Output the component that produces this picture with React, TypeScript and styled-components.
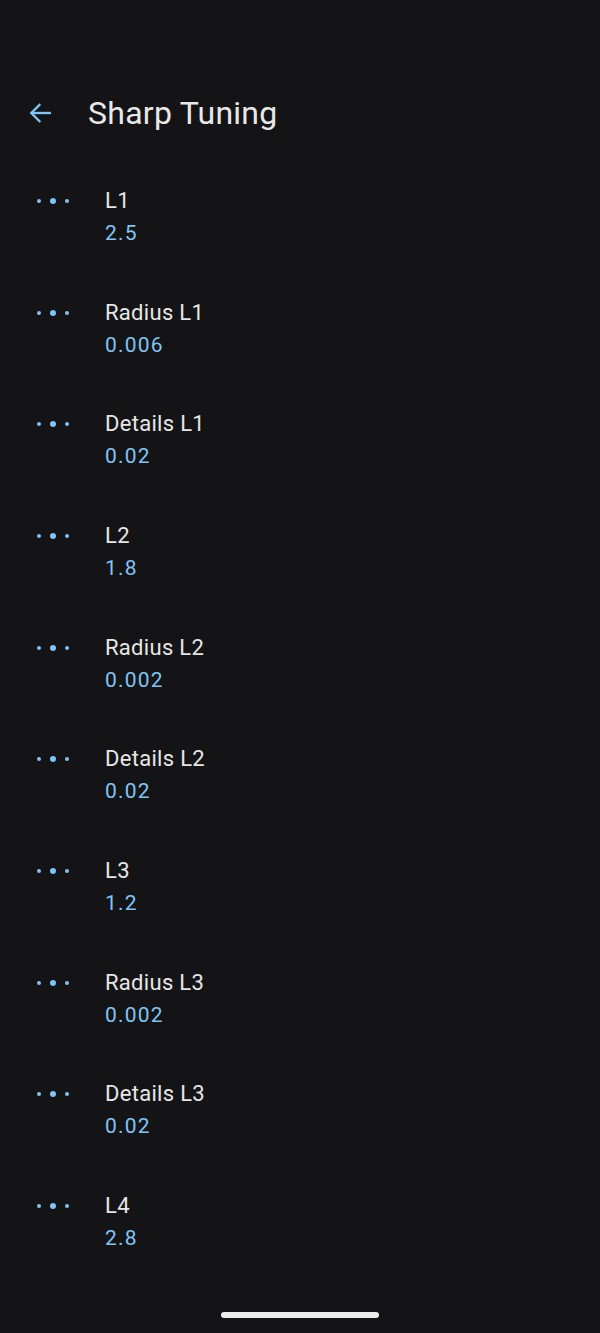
import React from "react";
import styled, { createGlobalStyle } from "styled-components";

const Global = createGlobalStyle`
  html, body { margin: 0; padding: 0; background: #141416; }
  body { font-family: Roboto, "Noto Sans", sans-serif; }
`;

const Screen = styled.div`
  width: 600px;
  height: 1333px;
  background: #141416;
  display: flex;
  flex-direction: column;
  position: relative;
  overflow: hidden;
`;

const Header = styled.header`
  margin-top: 88px;
  height: 50px;
  display: flex;
  align-items: center;
  padding-left: 27px;
  gap: 35px;
`;

const BackButton = styled.button`
  background: none;
  border: none;
  padding: 0;
  width: 26px;
  height: 26px;
  display: flex;
  align-items: center;
  justify-content: center;
  color: #7fc4f5;
`;

const Title = styled.h1`
  margin: 0;
  font-size: 32px;
  font-weight: 400;
  color: #e8e8e8;
  letter-spacing: 0.25px;
`;

const List = styled.div`
  display: flex;
  flex-direction: column;
  padding-top: 35px;
`;

const Row = styled.div`
  height: 111.67px;
  display: flex;
  align-items: flex-start;
  padding-left: 37px;
  box-sizing: border-box;
  padding-top: 14px;
`;

const Dots = styled.div`
  width: 68px;
  height: 28px;
  display: flex;
  align-items: center;
  gap: 9px;
`;

const Dot = styled.span<{ $big?: boolean }>`
  width: ${(p) => (p.$big ? 6 : 4)}px;
  height: ${(p) => (p.$big ? 6 : 4)}px;
  border-radius: 50%;
  background: #7fc4f5;
`;

const Texts = styled.div`
  display: flex;
  flex-direction: column;
`;

const Label = styled.div`
  font-size: 22px;
  line-height: 28px;
  letter-spacing: 0.3px;
  color: #e6e6e6;
`;

const Value = styled.div`
  font-size: 21px;
  line-height: 28px;
  margin-top: 4px;
  letter-spacing: 1.2px;
  color: #7fc4f5;
`;

const HomeBar = styled.div`
  position: absolute;
  left: 221px;
  bottom: 15px;
  width: 158px;
  height: 6px;
  border-radius: 3px;
  background: #ececec;
`;

const items: [string, string][] = [
  ["L1", "2.5"],
  ["Radius L1", "0.006"],
  ["Details L1", "0.02"],
  ["L2", "1.8"],
  ["Radius L2", "0.002"],
  ["Details L2", "0.02"],
  ["L3", "1.2"],
  ["Radius L3", "0.002"],
  ["Details L3", "0.02"],
  ["L4", "2.8"],
];

export default function App() {
  return (
    <Screen>
      <Global />
      <Header>
        <BackButton aria-label="Back">
          <svg width="26" height="26" viewBox="0 0 24 24" fill="none" stroke="currentColor" strokeWidth="2.2" strokeLinecap="square">
            <path d="M21 12H4.5" />
            <path d="M11.5 4.5L4 12l7.5 7.5" />
          </svg>
        </BackButton>
        <Title>Sharp Tuning</Title>
      </Header>
      <List>
        {items.map(([label, value]) => (
          <Row key={label}>
            <Dots>
              <Dot />
              <Dot $big />
              <Dot />
            </Dots>
            <Texts>
              <Label>{label}</Label>
              <Value>{value}</Value>
            </Texts>
          </Row>
        ))}
      </List>
      <HomeBar />
    </Screen>
  );
}
